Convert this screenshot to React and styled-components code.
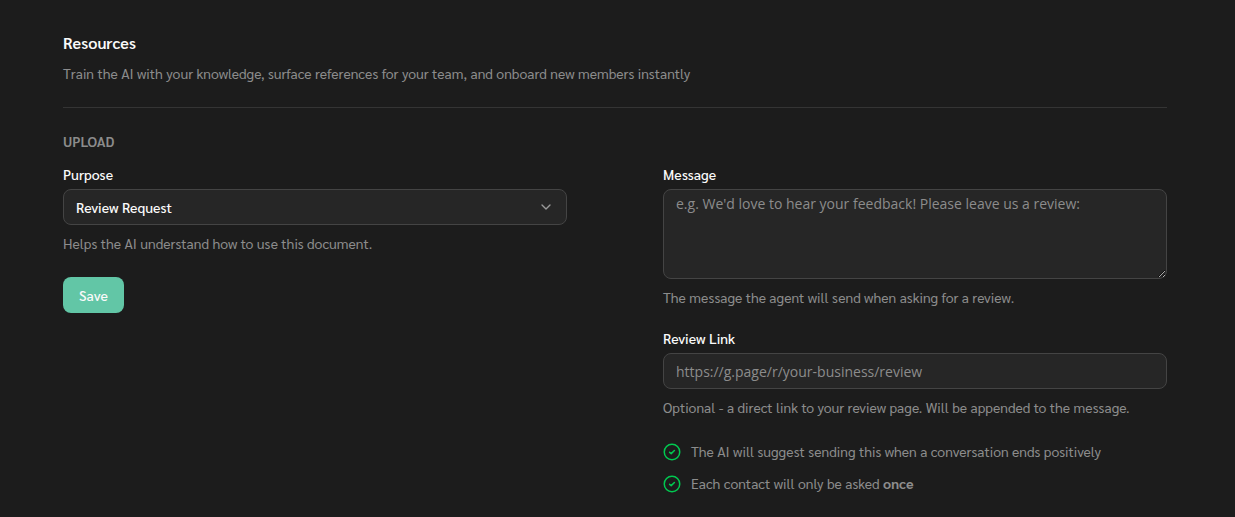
import React from 'react';
import styled, { createGlobalStyle } from 'styled-components';
import { ChevronDown } from 'lucide-react';

const GlobalStyle = createGlobalStyle`
  *, *::before, *::after { box-sizing: border-box; }
  body {
    margin: 0;
    background: #1c1c1c;
    color: #fafafa;
    font-family: Sarabun, Lato, "Noto Sans", sans-serif;
    font-size: 14px;
    line-height: 20px;
  }
`;

const Page = styled.main`
  padding: 31px 68px 20px 63px;
`;

const Header = styled.header`
  padding-bottom: 24px;
  border-bottom: 1px solid #343434;
`;

const Title = styled.h1`
  margin: 0 0 8px;
  font-size: 16px;
  font-weight: 600;
  line-height: 24px;
`;

const Hint = styled.p`
  margin: 0;
  color: #8c8c8c;
`;

const SectionTitle = styled.h2`
  margin: 23px 0 13px;
  color: #8c8c8c;
  font-size: 14px;
  font-weight: 600;
  line-height: 20px;
  text-transform: uppercase;
`;

const Columns = styled.form`
  display: grid;
  grid-template-columns: repeat(2, minmax(0, 1fr));
  column-gap: 96px;
  align-items: start;
`;

const Column = styled.div`
  display: flex;
  flex-direction: column;
  gap: 24px;
`;

const Fields = styled.div`
  display: flex;
  flex-direction: column;
  gap: 21px;
`;

const Field = styled.div`
  display: flex;
  flex-direction: column;
  gap: 8px;
`;

const Control = styled.div`
  display: flex;
  flex-direction: column;
  gap: 5px;
`;

const Label = styled.label`
  font-weight: 500;
  line-height: 20px;
`;

const boxStyles = `
  display: block;
  width: 100%;
  margin: 0;
  border: 1px solid #444444;
  border-radius: 8px;
  outline: none;
  background: #262626;
  color: #fafafa;
  font-size: 14px;
  line-height: 20px;
  &::placeholder { color: #8c8c8c; opacity: 1; }
`;

const TextInput = styled.input`
  ${boxStyles}
  height: 36px;
  padding: 0 12px;
  font-family: "Open Sans", sans-serif;
`;

const TextArea = styled.textarea`
  ${boxStyles}
  height: 90px;
  padding: 4px 12px;
  resize: vertical;
  font-family: "Open Sans", sans-serif;
`;

const SelectWrap = styled.div`
  position: relative;
`;

const Select = styled.select`
  ${boxStyles}
  height: 36px;
  padding: 0 36px 0 12px;
  appearance: none;
  font-family: inherit;
  font-weight: 500;
`;

const SelectArrow = styled(ChevronDown)`
  position: absolute;
  top: 10px;
  right: 13px;
  color: #999999;
  pointer-events: none;
`;

const SaveButton = styled.button`
  align-self: flex-start;
  height: 36px;
  padding: 0 16px;
  border: 0;
  border-radius: 8px;
  background: #62c6a6;
  color: #fafafa;
  font: inherit;
  font-weight: 500;
`;

const Notes = styled.ul`
  display: flex;
  flex-direction: column;
  gap: 12px;
  margin: 0;
  padding: 0;
  list-style: none;
`;

const Note = styled.li`
  display: flex;
  align-items: flex-end;
  gap: 10px;
  color: #8c8c8c;
`;

const CheckIcon = () => (
  <svg width="18" height="18" viewBox="0 0 18 18" fill="none" stroke="#00c950" strokeWidth="1.5" strokeLinecap="round" strokeLinejoin="round" aria-hidden="true">
    <circle cx="9" cy="9" r="7.75" />
    <path d="M6.6 9.3 8.2 10.6 11.4 7.5" />
  </svg>
);

export default function App() {
  return (
    <>
      <GlobalStyle />
      <Page>
        <Header>
          <Title>Resources</Title>
          <Hint>Train the AI with your knowledge, surface references for your team, and onboard new members instantly</Hint>
        </Header>
        <SectionTitle>Upload</SectionTitle>
        <Columns onSubmit={(e) => e.preventDefault()}>
          <Column>
            <Field>
              <Control>
                <Label htmlFor="purpose">Purpose</Label>
                <SelectWrap>
                  <Select id="purpose" defaultValue="review">
                    <option value="review">Review Request</option>
                  </Select>
                  <SelectArrow size={16} aria-hidden="true" />
                </SelectWrap>
              </Control>
              <Hint>Helps the AI understand how to use this document.</Hint>
            </Field>
            <SaveButton type="submit">Save</SaveButton>
          </Column>
          <Column>
            <Fields>
              <Field>
                <Control>
                  <Label htmlFor="message">Message</Label>
                  <TextArea id="message" placeholder="e.g. We'd love to hear your feedback! Please leave us a review:" />
                </Control>
                <Hint>The message the agent will send when asking for a review.</Hint>
              </Field>
              <Field>
                <Control>
                  <Label htmlFor="link">Review Link</Label>
                  <TextInput id="link" type="url" placeholder="https://g.page/r/your-business/review" />
                </Control>
                <Hint>Optional - a direct link to your review page. Will be appended to the message.</Hint>
              </Field>
            </Fields>
            <Notes>
              <Note>
                <CheckIcon />
                <span>The AI will suggest sending this when a conversation ends positively</span>
              </Note>
              <Note>
                <CheckIcon />
                <span>Each contact will only be asked <strong>once</strong></span>
              </Note>
            </Notes>
          </Column>
        </Columns>
      </Page>
    </>
  );
}
